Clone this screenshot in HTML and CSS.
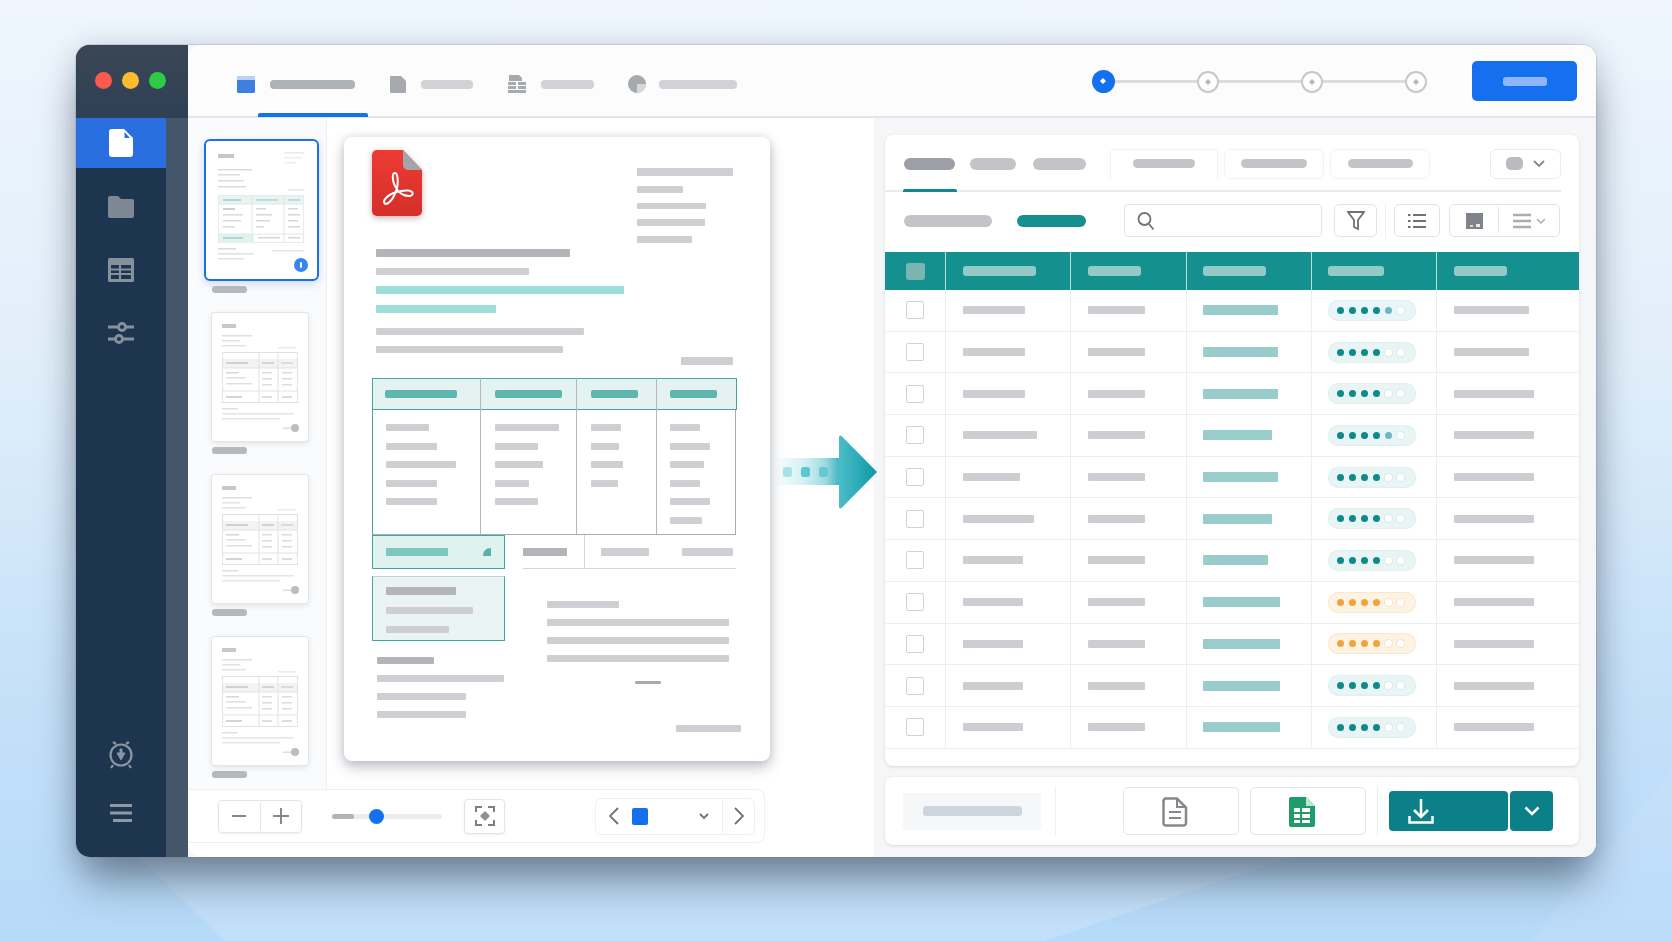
FILE: index.html
```html
<!DOCTYPE html>
<html lang="en">
<head>
    <meta charset="UTF-8">
    <title>PDF to table</title>
    <link rel="stylesheet" href="styles.css">
</head>
<body>
    <svg class="defs" width="0" height="0">
        <symbol id="thumb-page" viewBox="0 0 96 128">
            <rect x="10" y="11" width="14" height="4" fill="#b4b4b8"/>
            <rect x="10" y="22" width="30" height="1.5" fill="#d4d4d8"/>
            <rect x="10" y="27" width="18" height="1.5" fill="#d8d8dc"/>
            <rect x="10" y="32" width="24" height="1.5" fill="#d8d8dc"/>
            <rect x="66" y="34" width="18" height="1.5" fill="#e4e4e8"/>
            <rect x="10.5" y="39.5" width="75" height="50" fill="#fff" stroke="#d8d8dc"/>
            <rect x="11" y="46" width="74" height="9" fill="#efeff1"/>
            <path d="M47 40v49M66 40v49M11 55h74M11 78h74" stroke="#d8d8dc" fill="none"/>
            <rect x="14" y="49" width="22" height="2" fill="#bfbfc4"/>
            <rect x="50" y="49" width="12" height="2" fill="#c4c4c8"/>
            <rect x="69" y="49" width="12" height="2" fill="#cfcfd3"/>
            <rect x="14" y="59" width="13" height="1.5" fill="#c8c8cc"/>
            <rect x="14" y="64" width="20" height="1.5" fill="#d4d4d8"/>
            <rect x="14" y="70" width="26" height="1.5" fill="#d4d4d8"/>
            <rect x="50" y="59" width="10" height="1.5" fill="#d0d0d4"/>
            <rect x="50" y="65" width="10" height="1.5" fill="#d0d0d4"/>
            <rect x="50" y="71" width="10" height="1.5" fill="#d0d0d4"/>
            <rect x="70" y="59" width="10" height="1.5" fill="#d0d0d4"/>
            <rect x="70" y="65" width="10" height="1.5" fill="#d0d0d4"/>
            <rect x="70" y="71" width="10" height="1.5" fill="#d0d0d4"/>
            <rect x="14" y="83" width="16" height="2" fill="#c4c4c8"/>
            <rect x="50" y="83" width="10" height="2" fill="#d4d4d8"/>
            <rect x="70" y="83" width="10" height="2" fill="#d0d0d4"/>
            <rect x="10" y="95" width="16" height="1.5" fill="#d4d4d8"/>
            <rect x="10" y="100" width="72" height="1.5" fill="#dcdce0"/>
            <rect x="10" y="105" width="58" height="1.5" fill="#dcdce0"/>
            <rect x="71" y="114.5" width="8" height="1.5" fill="#d0d0d4"/>
            <circle cx="83" cy="115" r="4" fill="#a4a4a8"/>
        </symbol>
    </svg>

    <div class="window">
        <aside class="sidebar">
            <div class="lights">
                <span class="light light-red"></span>
                <span class="light light-yellow"></span>
                <span class="light light-green"></span>
            </div>
            <nav class="side-nav">
                <a class="side-item active">
                    <svg width="24" height="28" viewBox="0 0 24 28"><path d="M3 0h12l9 9v16a3 3 0 0 1-3 3H3a3 3 0 0 1-3-3V3a3 3 0 0 1 3-3z" fill="#fff"/><path d="M15.5 3l5.5 6h-5.5z" fill="#2a6fe0"/></svg>
                </a>
                <a class="side-item">
                    <svg width="26" height="22" viewBox="0 0 26 22"><path d="M2 0h8l3 3h11a2 2 0 0 1 2 2v15a2 2 0 0 1-2 2H2a2 2 0 0 1-2-2V2a2 2 0 0 1 2-2z" fill="#7d8894"/></svg>
                </a>
                <a class="side-item">
                    <svg width="26" height="24" viewBox="0 0 26 24"><rect width="26" height="24" rx="1.5" fill="#87919c"/><path d="M3 7h20v14H3z" fill="#1e3550"/><path d="M3 11.5h20M3 16h20M12 7v14" stroke="#87919c" stroke-width="2.2"/></svg>
                </a>
                <a class="side-item">
                    <svg width="28" height="24" viewBox="0 0 28 24" fill="none" stroke="#87919c" stroke-width="2.8"><path d="M1 6h26M1 18h26"/><circle cx="15" cy="6" r="3.5" fill="#1e3550"/><circle cx="12" cy="18" r="3.5" fill="#1e3550"/></svg>
                </a>
            </nav>
            <div class="side-bottom">
                <svg width="28" height="30" viewBox="0 0 28 30" fill="none" stroke="#8a95a3" stroke-width="2.2"><circle cx="14" cy="15" r="10.5"/><path d="M9 4 6 2M19 4l3-2M6 25l-2 3M22 25l2 3"/><path d="M10 13h3V9h2v4h3l-4 7z" fill="#8a95a3" stroke-width="1"/></svg>
                <svg width="22" height="18" viewBox="0 0 22 18" fill="none" stroke="#8f99a5" stroke-width="3"><path d="M0 1.5h22M0 9h22M3 16.5h19"/></svg>
            </div>
        </aside>

        <div class="main">
            <header class="topbar">
                <div class="tabs">
                    <div class="tab tab-active">
                        <svg width="18" height="17" viewBox="0 0 18 17"><rect width="18" height="17" rx="1.5" fill="#3f7fe0"/><rect width="18" height="4" fill="#b9d2f5"/></svg>
                        <span class="pill pill-tab w-85"></span>
                    </div>
                    <div class="tab">
                        <svg width="16" height="17" viewBox="0 0 16 17"><path d="M1 0h10l5 5v11a1 1 0 0 1-1 1H1a1 1 0 0 1-1-1V1a1 1 0 0 1 1-1z" fill="#a6a9ad"/></svg>
                        <span class="pill pill-tab-muted w-52"></span>
                    </div>
                    <div class="tab">
                        <svg width="18" height="18" viewBox="0 0 18 18" fill="#a6a9ad"><path d="M1 0h10l3 3v3H1z"/><rect y="7" width="8" height="3"/><rect x="10" y="7" width="8" height="3"/><rect y="11" width="8" height="3"/><rect x="10" y="11" width="8" height="3"/><rect y="15" width="18" height="3"/></svg>
                        <span class="pill pill-tab-muted w-53"></span>
                    </div>
                    <div class="tab tab-last">
                        <svg width="18" height="18" viewBox="0 0 18 18"><circle cx="9" cy="9" r="9" fill="#a6a9ad"/><path d="M9 9h9a9 9 0 0 1-9 9z" fill="#d6d8da"/></svg>
                        <span class="pill pill-tab-muted w-78"></span>
                    </div>
                </div>
                <div class="stepper">
                    <span class="step step-on"></span>
                    <span class="step-line"></span>
                    <span class="step"></span>
                    <span class="step-line"></span>
                    <span class="step"></span>
                    <span class="step-line"></span>
                    <span class="step"></span>
                </div>
                <button class="primary-btn"><span class="pill pill-primary"></span></button>
            </header>

            <div class="content">
                <section class="left-pane">
                    <div class="preview">
                        <div class="thumbs">
                            <div class="thumb thumb-active">
                                <svg width="110" height="137" viewBox="0 0 110 137">
                                    <rect x="12" y="13" width="16" height="4" fill="#bdbdc1"/>
                                    <rect x="78" y="11" width="20" height="1.5" fill="#e8e8ea"/>
                                    <rect x="78" y="16" width="18" height="1.5" fill="#ebebed"/>
                                    <rect x="78" y="21" width="12" height="1.5" fill="#ebebed"/>
                                    <rect x="12" y="28" width="34" height="1.5" fill="#d4d4d8"/>
                                    <rect x="12" y="33" width="22" height="1.5" fill="#d8d8dc"/>
                                    <rect x="12" y="39" width="26" height="1.5" fill="#d8d8dc"/>
                                    <rect x="12" y="45" width="28" height="1.5" fill="#d8d8dc"/>
                                    <rect x="82" y="48" width="16" height="1.5" fill="#e4e4e8"/>
                                    <rect x="12.5" y="54.5" width="85" height="47" fill="#fff" stroke="#dcebe9"/>
                                    <rect x="13" y="55" width="84" height="8" fill="#e4f2f0"/>
                                    <rect x="13" y="93" width="35" height="9" fill="#dff0ee"/>
                                    <path d="M46 55v47M78 55v47M13 63h84M13 93h84" stroke="#d8e6e4" fill="none"/>
                                    <rect x="17" y="58" width="18" height="2" fill="#a5cfca"/>
                                    <rect x="50" y="58" width="22" height="2" fill="#b4d6d2"/>
                                    <rect x="82" y="58" width="12" height="2" fill="#b4d6d2"/>
                                    <rect x="17" y="67" width="12" height="2" fill="#c8c8cc"/>
                                    <rect x="17" y="73" width="20" height="1.5" fill="#d4d4d8"/>
                                    <rect x="17" y="79" width="18" height="1.5" fill="#d4d4d8"/>
                                    <rect x="17" y="85" width="12" height="1.5" fill="#d4d4d8"/>
                                    <rect x="50" y="67" width="10" height="1.5" fill="#d0d0d4"/>
                                    <rect x="50" y="73" width="16" height="1.5" fill="#d0d0d4"/>
                                    <rect x="50" y="79" width="14" height="1.5" fill="#d0d0d4"/>
                                    <rect x="50" y="85" width="8" height="1.5" fill="#d0d0d4"/>
                                    <rect x="82" y="67" width="10" height="1.5" fill="#d0d0d4"/>
                                    <rect x="82" y="73" width="12" height="1.5" fill="#d0d0d4"/>
                                    <rect x="82" y="79" width="10" height="1.5" fill="#d0d0d4"/>
                                    <rect x="82" y="85" width="12" height="1.5" fill="#d0d0d4"/>
                                    <rect x="17" y="96" width="20" height="2" fill="#a5cfca"/>
                                    <rect x="52" y="96" width="22" height="1.5" fill="#d0d0d4"/>
                                    <rect x="82" y="96" width="12" height="1.5" fill="#d0d0d4"/>
                                    <rect x="12" y="107" width="18" height="1.5" fill="#d4d4d8"/>
                                    <rect x="12" y="112" width="36" height="1.5" fill="#dcdce0"/>
                                    <rect x="12" y="117" width="26" height="1.5" fill="#dcdce0"/>
                                    <rect x="66" y="109" width="32" height="1.5" fill="#e0e0e4"/>
                                    <circle cx="95" cy="124" r="7" fill="#1570ef"/>
                                    <rect x="94" y="121" width="2" height="6" rx="1" fill="#fff"/>
                                </svg>
                            </div>
                            <span class="thumb-label thumb-label-first"></span>
                            <div class="thumb"><svg width="96" height="128"><use href="#thumb-page"/></svg></div>
                            <span class="thumb-label"></span>
                            <div class="thumb"><svg width="96" height="128"><use href="#thumb-page"/></svg></div>
                            <span class="thumb-label"></span>
                            <div class="thumb"><svg width="96" height="128"><use href="#thumb-page"/></svg></div>
                            <span class="thumb-label"></span>
                        </div>

                        <div class="canvas">
                            <article class="doc">
                                <div class="doc-head">
                                    <svg class="pdf-icon" width="50" height="66" viewBox="0 0 50 66">
                                        <defs>
                                            <linearGradient id="pdf-red" x1="0" y1="0" x2="0" y2="1">
                                                <stop offset="0" stop-color="#ee3b34"/>
                                                <stop offset="1" stop-color="#d42f2b"/>
                                            </linearGradient>
                                        </defs>
                                        <path d="M5 0h26l19 20v41a5 5 0 0 1-5 5H5a5 5 0 0 1-5-5V5a5 5 0 0 1 5-5z" fill="url(#pdf-red)"/>
                                        <path d="M31 0l19 20H36a5 5 0 0 1-5-5z" fill="#a3a5aa"/>
                                        <path d="M23 23c-3 0-3 7 0 13 3 6 8 10 14 10 5 0 5-5-1-5.5-7-.5-17 2-22 7.500-4 4-1 8 3 4.500 5-4.500 10-15 8.500-25-.5-3-1.500-4.500-2.500-4.500z" fill="none" stroke="#fff" stroke-width="2"/>
                                    </svg>
                                    <div class="doc-meta">
                                        <span class="bar bar-8 w-96"></span>
                                        <span class="bar w-46"></span>
                                        <span class="bar w-69"></span>
                                        <span class="bar w-68"></span>
                                        <span class="bar w-55"></span>
                                    </div>
                                </div>

                                <div class="doc-intro">
                                    <span class="bar bar-8 bar-mid w-194"></span>
                                    <span class="bar w-153"></span>
                                    <span class="bar bar-8 bar-mint w-248"></span>
                                    <span class="bar bar-8 bar-mint w-120"></span>
                                    <span class="bar intro-break w-208"></span>
                                    <span class="bar w-187"></span>
                                </div>
                                <span class="bar bar-8 doc-total w-52"></span>

                                <div class="sheet">
                                    <div class="sheet-col col-a">
                                        <div class="sheet-head"><span class="bar bar-8 bar-teal w-72"></span></div>
                                        <div class="sheet-body">
                                            <span class="bar w-43"></span>
                                            <span class="bar w-51"></span>
                                            <span class="bar w-70"></span>
                                            <span class="bar w-51"></span>
                                            <span class="bar w-51"></span>
                                        </div>
                                    </div>
                                    <div class="sheet-col col-b">
                                        <div class="sheet-head"><span class="bar bar-8 bar-teal w-67"></span></div>
                                        <div class="sheet-body">
                                            <span class="bar w-64"></span>
                                            <span class="bar w-43"></span>
                                            <span class="bar w-48"></span>
                                            <span class="bar w-34"></span>
                                            <span class="bar w-43"></span>
                                        </div>
                                    </div>
                                    <div class="sheet-col col-c">
                                        <div class="sheet-head"><span class="bar bar-8 bar-teal w-47"></span></div>
                                        <div class="sheet-body">
                                            <span class="bar w-30"></span>
                                            <span class="bar w-28"></span>
                                            <span class="bar w-32"></span>
                                            <span class="bar w-27"></span>
                                        </div>
                                    </div>
                                    <div class="sheet-col col-d">
                                        <div class="sheet-head"><span class="bar bar-8 bar-teal w-47"></span></div>
                                        <div class="sheet-body">
                                            <span class="bar w-30"></span>
                                            <span class="bar w-40"></span>
                                            <span class="bar w-34"></span>
                                            <span class="bar w-30"></span>
                                            <span class="bar w-40"></span>
                                            <span class="bar w-32"></span>
                                        </div>
                                    </div>
                                </div>

                                <div class="doc-lower">
                                    <div class="lower-left">
                                        <div class="subtotal">
                                            <span class="bar bar-8 bar-soft-teal w-62"></span>
                                            <svg width="8" height="8" viewBox="0 0 8 8"><path d="M0 8c0-5 3-8 8-8v8z" fill="#5cb0aa"/></svg>
                                        </div>
                                        <div class="total-box">
                                            <span class="bar bar-8 bar-mid w-70"></span>
                                            <span class="bar w-87"></span>
                                            <span class="bar w-63"></span>
                                        </div>
                                        <div class="notes">
                                            <span class="bar bar-mid w-57"></span>
                                            <span class="bar w-127"></span>
                                            <span class="bar w-89"></span>
                                            <span class="bar w-89"></span>
                                        </div>
                                    </div>
                                    <div class="lower-right">
                                        <div class="lower-tabs">
                                            <div class="lower-tab lower-tab-first"><span class="bar bar-8 bar-mid w-44"></span></div>
                                            <div class="lower-tab"><span class="bar bar-8 w-48"></span></div>
                                            <div class="lower-tab lower-tab-last"><span class="bar bar-8 w-51"></span></div>
                                        </div>
                                        <div class="lower-text">
                                            <span class="bar w-72"></span>
                                            <span class="bar w-182"></span>
                                            <span class="bar w-182"></span>
                                            <span class="bar w-182"></span>
                                            <span class="bar bar-dash w-26"></span>
                                            <span class="bar bar-sum w-65"></span>
                                        </div>
                                    </div>
                                </div>
                            </article>
                        </div>
                    </div>

                    <div class="zoom-bar">
                        <div class="zoom-group">
                            <button class="zoom-btn">
                                <svg width="14" height="14" viewBox="0 0 14 14"><path d="M0 7h14" stroke="#85888c" stroke-width="2"/></svg>
                            </button>
                            <button class="zoom-btn">
                                <svg width="16" height="16" viewBox="0 0 16 16"><path d="M0 8h16M8 0v16" stroke="#85888c" stroke-width="2"/></svg>
                            </button>
                        </div>
                        <div class="slider"><span class="slider-fill"></span><span class="slider-knob"></span></div>
                        <button class="fit-btn">
                            <svg width="20" height="20" viewBox="0 0 20 20" fill="none" stroke="#7d8084" stroke-width="2"><path d="M1 6V1h6M13 1h6v5M19 14v5h-6M7 19H1v-5"/><path d="M10 5l5 5-5 5-5-5z" fill="#8d9094" stroke="none"/></svg>
                        </button>
                        <div class="pager">
                            <button class="pager-main">
                                <svg width="10" height="18" viewBox="0 0 10 18" fill="none" stroke="#6f7276" stroke-width="1.8"><path d="M9 1 1 9l8 8"/></svg>
                                <span class="page-mark"></span>
                                <svg class="pager-caret" width="10" height="7" viewBox="0 0 10 7" fill="none" stroke="#6f7276" stroke-width="1.8"><path d="M1 1l4 4 4-4"/></svg>
                            </button>
                            <button class="pager-next">
                                <svg width="10" height="18" viewBox="0 0 10 18" fill="none" stroke="#6f7276" stroke-width="1.8"><path d="M1 1l8 8-8 8"/></svg>
                            </button>
                        </div>
                    </div>
                </section>

                <section class="right-pane">
                    <div class="card results">
                        <div class="card-tabs">
                            <span class="pill pill-strong w-51"></span>
                            <span class="pill w-46"></span>
                            <span class="pill w-53"></span>
                            <div class="outline-tab outline-tab-open"><span class="pill pill-small w-62"></span></div>
                            <div class="outline-tab"><span class="pill pill-small w-66"></span></div>
                            <div class="outline-tab"><span class="pill pill-small w-65"></span></div>
                            <div class="tab-menu">
                                <span class="tab-menu-blob"></span>
                                <svg width="12" height="8" viewBox="0 0 12 8" fill="none" stroke="#85888c" stroke-width="1.8"><path d="M1 1l5 5 5-5"/></svg>
                            </div>
                        </div>

                        <div class="toolbar">
                            <span class="pill w-88"></span>
                            <span class="pill pill-teal w-70"></span>
                            <div class="search">
                                <svg width="18" height="20" viewBox="0 0 18 20" fill="none" stroke="#6f7276" stroke-width="1.8"><circle cx="7.5" cy="8" r="6"/><path d="M12 13l4.5 5.5"/></svg>
                            </div>
                            <button class="tool-btn tool-filter">
                                <svg width="18" height="20" viewBox="0 0 18 20" fill="none" stroke="#6f7276" stroke-width="1.8"><path d="M1 1h16l-6 8v9l-4-2V9z"/></svg>
                            </button>
                            <span class="tool-divider"></span>
                            <button class="tool-btn tool-list">
                                <svg width="18" height="16" viewBox="0 0 18 16" fill="none" stroke="#6f7276" stroke-width="2"><path d="M5 2h13M5 8h13M5 14h13M0 2h2.5M0 8h2.5M0 14h2.5"/></svg>
                            </button>
                            <div class="tool-group">
                                <button class="tool-cell tool-cell-img">
                                    <svg width="17" height="16" viewBox="0 0 17 16"><rect width="17" height="16" fill="#80848a"/><rect x="4" y="12" width="3" height="2" fill="#d9dbde"/><rect x="10" y="11" width="4" height="3" fill="#e8eaec"/></svg>
                                </button>
                                <button class="tool-cell">
                                    <svg width="32" height="16" viewBox="0 0 32 16" fill="none"><path d="M0 2h18M0 8h18M0 14h18" stroke="#a9acb0" stroke-width="2.5"/><path d="M24 6l4 4 4-4" stroke="#a9acb0" stroke-width="1.5"/></svg>
                                </button>
                            </div>
                        </div>

                        <div class="grid-head">
                            <div class="gh-cell gh-check"><span class="head-check"></span></div>
                            <div class="gh-cell"><span class="pill-head w-73"></span></div>
                            <div class="gh-cell"><span class="pill-head w-53"></span></div>
                            <div class="gh-cell"><span class="pill-head w-63"></span></div>
                            <div class="gh-cell"><span class="pill-head w-56"></span></div>
                            <div class="gh-cell"><span class="pill-head w-53"></span></div>
                        </div>

                        <div class="grid-row">
                            <div class="cell cell-check"><span class="check"></span></div>
                            <div class="cell"><span class="bar bar-cell w-62"></span></div>
                            <div class="cell"><span class="bar bar-cell w-57"></span></div>
                            <div class="cell"><span class="bar bar-link w-75"></span></div>
                            <div class="cell"><span class="rating rating-blue"><i class="on"></i><i class="on"></i><i class="on"></i><i class="on"></i><i class="half"></i><i></i></span></div>
                            <div class="cell"><span class="bar bar-cell w-75"></span></div>
                        </div>
                        <div class="grid-row">
                            <div class="cell cell-check"><span class="check"></span></div>
                            <div class="cell"><span class="bar bar-cell w-62"></span></div>
                            <div class="cell"><span class="bar bar-cell w-57"></span></div>
                            <div class="cell"><span class="bar bar-link w-75"></span></div>
                            <div class="cell"><span class="rating"><i class="on"></i><i class="on"></i><i class="on"></i><i class="on"></i><i></i><i></i></span></div>
                            <div class="cell"><span class="bar bar-cell w-75"></span></div>
                        </div>
                        <div class="grid-row">
                            <div class="cell cell-check"><span class="check"></span></div>
                            <div class="cell"><span class="bar bar-cell w-62"></span></div>
                            <div class="cell"><span class="bar bar-cell w-57"></span></div>
                            <div class="cell"><span class="bar bar-link w-75"></span></div>
                            <div class="cell"><span class="rating"><i class="on"></i><i class="on"></i><i class="on"></i><i class="on"></i><i></i><i></i></span></div>
                            <div class="cell"><span class="bar bar-cell w-80"></span></div>
                        </div>
                        <div class="grid-row">
                            <div class="cell cell-check"><span class="check"></span></div>
                            <div class="cell"><span class="bar bar-cell w-74"></span></div>
                            <div class="cell"><span class="bar bar-cell w-57"></span></div>
                            <div class="cell"><span class="bar bar-link w-69"></span></div>
                            <div class="cell"><span class="rating"><i class="on"></i><i class="on"></i><i class="on"></i><i class="on"></i><i class="half"></i><i></i></span></div>
                            <div class="cell"><span class="bar bar-cell w-80"></span></div>
                        </div>
                        <div class="grid-row">
                            <div class="cell cell-check"><span class="check"></span></div>
                            <div class="cell"><span class="bar bar-cell w-57"></span></div>
                            <div class="cell"><span class="bar bar-cell w-57"></span></div>
                            <div class="cell"><span class="bar bar-link w-75"></span></div>
                            <div class="cell"><span class="rating"><i class="on"></i><i class="on"></i><i class="on"></i><i class="on"></i><i></i><i></i></span></div>
                            <div class="cell"><span class="bar bar-cell w-80"></span></div>
                        </div>
                        <div class="grid-row">
                            <div class="cell cell-check"><span class="check"></span></div>
                            <div class="cell"><span class="bar bar-cell w-71"></span></div>
                            <div class="cell"><span class="bar bar-cell w-57"></span></div>
                            <div class="cell"><span class="bar bar-link w-69"></span></div>
                            <div class="cell"><span class="rating"><i class="on"></i><i class="on"></i><i class="on"></i><i class="on"></i><i></i><i></i></span></div>
                            <div class="cell"><span class="bar bar-cell w-80"></span></div>
                        </div>
                        <div class="grid-row">
                            <div class="cell cell-check"><span class="check"></span></div>
                            <div class="cell"><span class="bar bar-cell w-60"></span></div>
                            <div class="cell"><span class="bar bar-cell w-57"></span></div>
                            <div class="cell"><span class="bar bar-link w-65"></span></div>
                            <div class="cell"><span class="rating"><i class="on"></i><i class="on"></i><i class="on"></i><i class="on"></i><i></i><i></i></span></div>
                            <div class="cell"><span class="bar bar-cell w-80"></span></div>
                        </div>
                        <div class="grid-row">
                            <div class="cell cell-check"><span class="check"></span></div>
                            <div class="cell"><span class="bar bar-cell w-60"></span></div>
                            <div class="cell"><span class="bar bar-cell w-57"></span></div>
                            <div class="cell"><span class="bar bar-link w-77"></span></div>
                            <div class="cell"><span class="rating rating-warn"><i class="on"></i><i class="on"></i><i class="on"></i><i class="on"></i><i></i><i></i></span></div>
                            <div class="cell"><span class="bar bar-cell w-80"></span></div>
                        </div>
                        <div class="grid-row">
                            <div class="cell cell-check"><span class="check"></span></div>
                            <div class="cell"><span class="bar bar-cell w-60"></span></div>
                            <div class="cell"><span class="bar bar-cell w-57"></span></div>
                            <div class="cell"><span class="bar bar-link w-77"></span></div>
                            <div class="cell"><span class="rating rating-warn"><i class="on"></i><i class="on"></i><i class="on"></i><i class="on"></i><i></i><i></i></span></div>
                            <div class="cell"><span class="bar bar-cell w-80"></span></div>
                        </div>
                        <div class="grid-row">
                            <div class="cell cell-check"><span class="check"></span></div>
                            <div class="cell"><span class="bar bar-cell w-60"></span></div>
                            <div class="cell"><span class="bar bar-cell w-57"></span></div>
                            <div class="cell"><span class="bar bar-link w-77"></span></div>
                            <div class="cell"><span class="rating"><i class="on"></i><i class="on"></i><i class="on"></i><i class="on"></i><i></i><i></i></span></div>
                            <div class="cell"><span class="bar bar-cell w-80"></span></div>
                        </div>
                        <div class="grid-row">
                            <div class="cell cell-check"><span class="check"></span></div>
                            <div class="cell"><span class="bar bar-cell w-60"></span></div>
                            <div class="cell"><span class="bar bar-cell w-57"></span></div>
                            <div class="cell"><span class="bar bar-link w-77"></span></div>
                            <div class="cell"><span class="rating"><i class="on"></i><i class="on"></i><i class="on"></i><i class="on"></i><i></i><i></i></span></div>
                            <div class="cell"><span class="bar bar-cell w-80"></span></div>
                        </div>
                    </div>

                    <div class="card actions">
                        <div class="file-name"><span class="file-name-pill"></span></div>
                        <span class="action-divider"></span>
                        <button class="file-btn">
                            <svg width="26" height="30" viewBox="0 0 26 30" fill="none" stroke="#85888c" stroke-width="2.5"><path d="M3 1.5h12l9 9V26a2.5 2.5 0 0 1-2.5 2.5H3.5A2.5 2.5 0 0 1 1.5 26V3.5z"/><path d="M15 1.5V10h9M7 15h12M7 21h12" stroke-width="2"/></svg>
                        </button>
                        <button class="file-btn">
                            <svg width="26" height="30" viewBox="0 0 26 30"><path d="M2 0h15l9 9v19a2 2 0 0 1-2 2H2a2 2 0 0 1-2-2V2a2 2 0 0 1 2-2z" fill="#1f9d68"/><path d="M17 0l9 9h-9z" fill="#bfe6d4"/><g fill="#fff"><rect x="5" y="11" width="6" height="4"/><rect x="13" y="11" width="8" height="4"/><rect x="5" y="17" width="6" height="4"/><rect x="13" y="17" width="8" height="4"/><rect x="5" y="23" width="6" height="3"/><rect x="13" y="23" width="8" height="3"/></g></svg>
                        </button>
                        <span class="action-divider action-divider-right"></span>
                        <div class="download">
                            <button class="download-main">
                                <svg width="26" height="26" viewBox="0 0 26 26" fill="none" stroke="#fff" stroke-width="2.5"><path d="M13 1v17M6 12l7 7 7-7M1.500 18v6.500h23V18"/></svg>
                            </button>
                            <button class="download-menu">
                                <svg width="16" height="10" viewBox="0 0 16 10" fill="none" stroke="#fff" stroke-width="2.5"><path d="M1.500 1.500 8 8l6.500-6.500"/></svg>
                            </button>
                        </div>
                    </div>
                </section>

                <div class="flow-arrow">
                    <svg width="104" height="74" viewBox="0 0 104 74">
                        <defs>
                            <linearGradient id="arrow-shaft" x1="0" y1="0" x2="1" y2="0">
                                <stop offset="0" stop-color="#bfe9ec" stop-opacity="0"/>
                                <stop offset="0.45" stop-color="#c4ebee" stop-opacity="0.7"/>
                                <stop offset="0.8" stop-color="#9ad9df"/>
                                <stop offset="1" stop-color="#45b6c3"/>
                            </linearGradient>
                            <linearGradient id="arrow-head" x1="0" y1="0" x2="1" y2="0">
                                <stop offset="0" stop-color="#4cbdc9"/>
                                <stop offset="1" stop-color="#0c99a6"/>
                            </linearGradient>
                        </defs>
                        <rect x="0" y="23" width="66" height="27" fill="url(#arrow-shaft)"/>
                        <rect x="10" y="32" width="9" height="10" rx="2.5" fill="#a8e2e6"/>
                        <rect x="28" y="32" width="9" height="10" rx="2.5" fill="#5cc7d2"/>
                        <rect x="46" y="32" width="9" height="10" rx="2.5" fill="#68c8d0"/>
                        <path d="M66 2a1.500 1.500 0 0 1 2.500-1L104 37 68.500 73a1.500 1.500 0 0 1-2.500-1z" fill="url(#arrow-head)"/>
                    </svg>
                </div>
            </div>
        </div>
    </div>
</body>
</html>
```

FILE: styles.css
```css
:root {
    --navy: #1e3550;
    --blue: #1570ef;
    --teal: #14908f;
    --line: #eceef1;
    --bar: #cfcfd3;
}

* {
    margin: 0;
    padding: 0;
    box-sizing: border-box;
}

html, body {
    height: 100%;
}

body {
    font-family: "Inter", sans-serif;
    overflow: hidden;
    position: relative;
    padding: 45px 76px 0;
    background: linear-gradient(180deg, #eff6fd 0%, #e0eefa 40%, #c6e1f9 72%, #b6daf9 100%);
}

/* soft shapes in the wallpaper */
body::before,
body::after {
    content: "";
    position: absolute;
    inset: 0;
    background: rgba(255, 255, 255, 0.16);
}

body::before {
    clip-path: polygon(100px 820px, 1400px 820px, 1045px 941px, 225px 941px);
}

body::after {
    background: rgba(255, 255, 255, 0.08);
    clip-path: polygon(1672px 770px, 1672px 941px, 1530px 941px);
}

.defs {
    display: block;
    height: 0;
}

button {
    background: #fff;
    border: none;
    display: flex;
    align-items: center;
    justify-content: center;
}

.window {
    position: relative;
    z-index: 1;
    width: 1520px;
    height: 812px;
    display: flex;
    border-radius: 14px;
    background: #f5f6f8;
    box-shadow:
        0 0 0 1px rgba(110, 120, 135, 0.22),
        0 30px 42px -6px rgba(40, 50, 65, 0.52),
        0 0 28px rgba(60, 80, 110, 0.18);
    overflow: hidden;
}

/* sidebar */
.sidebar {
    width: 112px;
    flex: none;
    display: flex;
    flex-direction: column;
    background: linear-gradient(90deg, var(--navy) 90px, #44566a 90px);
}

.lights {
    height: 73px;
    display: flex;
    align-items: center;
    gap: 10px;
    padding: 0 0 2px 19px;
    background: linear-gradient(180deg, #3a4654, #2f4055);
}

.light {
    width: 17px;
    height: 17px;
    border-radius: 50%;
}

.light-red { background: #fb5a50; }
.light-yellow { background: #fbbd2e; }
.light-green { background: #2ecb47; }

.side-nav {
    width: 90px;
    display: flex;
    flex-direction: column;
}

.side-item {
    height: 50px;
    margin-bottom: 13px;
    display: flex;
    align-items: center;
    justify-content: center;
}

.side-item.active {
    background: #2a6fe0;
    margin-bottom: 14px;
}

.side-bottom {
    width: 90px;
    margin-top: auto;
    padding-bottom: 35px;
    display: flex;
    flex-direction: column;
    align-items: center;
    gap: 34px;
}

/* top bar */
.main {
    flex: 1;
    min-width: 0;
    display: flex;
    flex-direction: column;
    background: #fff;
    border-radius: 14px 0 0 14px;
    overflow: hidden;
}

.topbar {
    height: 73px;
    flex: none;
    display: flex;
    align-items: center;
    padding: 0 19px 0 49px;
    background: #fcfcfd;
    border-bottom: 2px solid #e3e5e8;
}

.tabs {
    display: flex;
    align-items: center;
    gap: 35px;
    height: 100%;
    margin-bottom: 1px;
}

.tab {
    position: relative;
    height: 100%;
    display: flex;
    align-items: center;
    gap: 15px;
    padding-top: 8px;
}

.tab-last {
    gap: 13px;
    margin-left: -1px;
}

.tab-active::after {
    content: "";
    position: absolute;
    left: 21px;
    bottom: -1px;
    width: 110px;
    height: 4px;
    background: var(--blue);
    border-radius: 2px 2px 0 0;
}

.pill {
    display: block;
    height: 12px;
    border-radius: 6px;
    background: #c2c4c8;
}

.pill-tab { height: 9px; border-radius: 4px; background: #adb2b8; }
.pill-tab-muted { height: 9px; border-radius: 4px; background: #d0d2d5; }
.pill-small { height: 9px; }
.pill-strong { background: #9ca0a6; }
.pill-teal { background: var(--teal); }

.stepper {
    margin-left: auto;
    margin-right: 45px;
    margin-top: 2px;
    display: flex;
    align-items: center;
}

.step {
    width: 22px;
    height: 22px;
    border-radius: 50%;
    border: 2px solid #c4c7cb;
    background: #fff;
    position: relative;
}

.step::after {
    content: "";
    position: absolute;
    left: 6px;
    top: 6px;
    width: 6px;
    height: 6px;
    background: #b5b8bc;
    transform: rotate(45deg) scale(0.7);
}

.step-on {
    width: 23px;
    height: 23px;
    border: none;
    background: var(--blue);
}

.step-on::after {
    left: 8px;
    top: 8px;
    background: #fff;
}

.step-line {
    width: 82px;
    height: 3px;
    background: #d9dbde;
}

.primary-btn {
    width: 105px;
    height: 40px;
    margin-top: 1px;
    border-radius: 5px;
    background: var(--blue);
}

.pill-primary {
    width: 44px;
    height: 9px;
    border-radius: 3px;
    background: #8fb6f8;
}

/* content */
.content {
    flex: 1;
    min-height: 0;
    display: flex;
    position: relative;
}

.left-pane {
    width: 686px;
    flex: none;
    display: flex;
    flex-direction: column;
    background: #fff;
}

.preview {
    height: 671px;
    flex: none;
    display: flex;
}

.thumbs {
    width: 139px;
    flex: none;
    padding: 21px 0 0 16px;
    background: #fafbfc;
    border-right: 1px solid #eceef0;
    overflow: hidden;
}

.thumb {
    width: 96px;
    height: 128px;
    margin-left: 8px;
    background: #fff;
    border-radius: 3px;
    box-shadow: 0 0 0 1px #e4e5e8, 0 2px 6px rgba(40, 50, 70, 0.14);
}

.thumb svg {
    display: block;
    opacity: 0.72;
}

.thumb-active {
    width: 115px;
    height: 142px;
    margin-left: 0;
    border: 2.5px solid #1e6fe0;
    border-radius: 6px;
    box-shadow: 0 3px 8px rgba(30, 90, 200, 0.2);
}

.thumb-active svg {
    opacity: 0.85;
}

.thumb-label {
    display: block;
    width: 35px;
    height: 7px;
    margin: 6px 0 21px 8px;
    border-radius: 3px;
    background: #b6b8bc;
}

.thumb-label-first {
    margin-top: 5px;
    margin-bottom: 20px;
}

.canvas {
    flex: 1;
    padding: 19px 0 0 17px;
    background: #fff;
}

/* document */
.doc {
    width: 426px;
    height: 624px;
    border-radius: 8px;
    background: #fff;
    box-shadow: 0 6px 14px rgba(30, 40, 60, 0.28), 0 0 8px rgba(30, 40, 60, 0.1);
}

.bar {
    display: block;
    height: 7px;
    background: var(--bar);
    border-radius: 1px;
}

.bar-8 { height: 8px; }
.bar-mid { background: #b5b5b9; }
.bar-mint { background: #9adfd8; }
.bar-teal { background: #5fb5b0; border-radius: 2px; }
.bar-soft-teal { background: #7cc9c2; }
.bar-cell { height: 8px; background: #cdced2; }
.bar-link { height: 10px; background: #98cdcb; }

.doc-head {
    display: flex;
    justify-content: space-between;
    height: 106px;
    padding: 13px 37px 0 28px;
}

.pdf-icon {
    filter: drop-shadow(0 2px 3px rgba(120, 30, 30, 0.35));
}

.doc-meta {
    display: flex;
    flex-direction: column;
    gap: 10px;
    width: 96px;
    margin-top: 18px;
}

.doc-intro {
    display: flex;
    flex-direction: column;
    gap: 11px;
    margin: 6px 0 0 32px;
}

.intro-break {
    margin-top: 4px;
}

.doc-total {
    margin: 4px 37px 0 auto;
}

.sheet {
    display: grid;
    grid-template-columns: 107px 96px 80px 1fr;
    width: 364px;
    height: 157px;
    margin: 13px 0 0 28px;
    border-left: 1.5px solid #4aa39f;
    border-bottom: 1.5px solid #a9abaf;
}

.sheet-col + .sheet-col {
    border-left: 1px solid #b4b6ba;
}

.col-d {
    border-right: 1.5px solid #a9abaf;
}

.sheet-head {
    height: 32px;
    padding: 11px 0 0 12px;
    background: #e4f2f1;
    border-top: 1.5px solid #4aa39f;
    border-bottom: 1.5px solid #4aa39f;
}

.col-b .sheet-head, .col-c .sheet-head { padding-left: 14px; }
.col-d .sheet-head {
    padding-left: 13px;
    margin-right: -1.5px;
    border-right: 1.5px solid #4aa39f;
}

.sheet-body {
    display: flex;
    flex-direction: column;
    gap: 11.6px;
    padding: 14px 0 0 13px;
}

.col-b .sheet-body, .col-c .sheet-body { padding-left: 14px; }

.doc-lower {
    display: grid;
    grid-template-columns: 133px 1fr;
    margin-left: 28px;
}

.subtotal {
    height: 34px;
    display: flex;
    align-items: center;
    justify-content: space-between;
    padding: 0 13px;
    background: #dff2f0;
    border: 1.5px solid #3ea79f;
}

.total-box {
    height: 65px;
    margin-top: 7px;
    display: flex;
    flex-direction: column;
    gap: 12px;
    padding: 10px 0 0 13px;
    background: #eaf4f4;
    border: 1.5px solid #3ea79f;
    border-top-color: #c6d2d2;
}

.notes {
    display: flex;
    flex-direction: column;
    gap: 11px;
    margin: 16px 0 0 5px;
}

.lower-right {
    padding-left: 18px;
}

.lower-tabs {
    width: 213px;
    height: 34px;
    display: flex;
    border-bottom: 1.5px solid #d4d5d8;
}

.lower-tab {
    width: 97px;
    display: flex;
    align-items: center;
    padding-left: 16px;
}

.lower-tab-first {
    width: 62px;
    padding-left: 0;
    border-right: 1px solid #d4d5d8;
}

.lower-tab-last {
    width: 54px;
    padding-left: 0;
}

.lower-text {
    display: flex;
    flex-direction: column;
    gap: 11px;
    margin: 32px 0 0 24px;
}

.bar-dash {
    height: 3px;
    margin: 8px 0 0 88px;
    background: #aaaaae;
}

.bar-sum {
    margin: 30px 0 0 129px;
}

/* zoom bar */
.zoom-bar {
    width: 577px;
    height: 54px;
    display: flex;
    align-items: center;
    padding-left: 30px;
    background: #fff;
    border: 1px solid #eef0f2;
    border-left: none;
    border-radius: 0 8px 8px 0;
}

.zoom-group {
    display: flex;
    width: 84px;
    height: 33px;
    border: 1px solid #e4e5e8;
    border-radius: 4px;
    box-shadow: 0 1px 2px rgba(40, 50, 70, 0.08);
}

.zoom-btn {
    flex: 1;
    border-radius: 4px;
}

.zoom-btn + .zoom-btn {
    border-left: 1px solid #e4e5e8;
}

.slider {
    position: relative;
    width: 110px;
    height: 5px;
    margin-left: 30px;
    border-radius: 3px;
    background: #ebecef;
}

.slider-fill {
    display: block;
    width: 22px;
    height: 100%;
    border-radius: 3px;
    background: #b2b3b7;
}

.slider-knob {
    position: absolute;
    left: 37px;
    top: -5px;
    width: 15px;
    height: 15px;
    border-radius: 50%;
    background: var(--blue);
}

.fit-btn {
    width: 41px;
    height: 35px;
    margin-left: 22px;
    border: 1px solid #e4e5e8;
    border-radius: 4px;
    box-shadow: 0 1px 2px rgba(40, 50, 70, 0.08);
}

.pager {
    width: 160px;
    height: 37px;
    margin-left: 90px;
    display: flex;
    border: 1px solid #eef0f2;
    border-radius: 6px;
}

.pager-main {
    width: 127px;
    justify-content: flex-start;
    padding-left: 13px;
    border-radius: 6px 0 0 6px;
    border-right: 1px solid #eef0f2;
}

.page-mark {
    width: 16px;
    height: 17px;
    margin-left: 13px;
    border-radius: 2px;
    background: var(--blue);
}

.pager-caret {
    margin-left: auto;
    margin-right: 13px;
}

.pager-next {
    flex: 1;
    border-radius: 0 6px 6px 0;
}

/* right pane */
.right-pane {
    flex: 1;
    min-width: 0;
    display: flex;
    flex-direction: column;
    gap: 11px;
    padding: 17px 17px 0 11px;
    background: #f5f6f8;
}

.card {
    background: #fff;
    border-radius: 8px;
    box-shadow: 0 1px 3px rgba(40, 50, 70, 0.14);
}

.results {
    height: 631px;
    overflow: hidden;
}

.card-tabs {
    height: 57px;
    margin-right: 18px;
    display: flex;
    align-items: center;
    padding: 2px 0 0 19px;
    border-bottom: 2px solid #e9ebee;
    position: relative;
}

.card-tabs > .w-46 { margin-left: 15px; }
.card-tabs > .w-53 { margin-left: 17px; }

.card-tabs::after {
    content: "";
    position: absolute;
    left: 18px;
    bottom: -2px;
    width: 54px;
    height: 3px;
    background: #0f8a8c;
    border-radius: 2px 2px 0 0;
}

.outline-tab {
    width: 100px;
    height: 30px;
    margin-left: 6px;
    display: flex;
    align-items: center;
    justify-content: center;
    border: 1px solid #f0f1f3;
    border-radius: 7px;
}

.outline-tab-open {
    width: 108px;
    margin-left: 24px;
    border-bottom-color: transparent;
    border-radius: 5px 5px 0 0;
}

.tab-menu {
    width: 71px;
    height: 30px;
    margin-left: auto;
    display: flex;
    align-items: center;
    justify-content: center;
    gap: 10px;
    border: 1px solid #e9ebee;
    border-radius: 6px;
}

.tab-menu-blob {
    width: 17px;
    height: 13px;
    border-radius: 5px;
    background: #b9bbbf;
}

.toolbar {
    height: 60px;
    display: flex;
    align-items: center;
    padding: 0 19px 3px;
}

.toolbar .pill-teal {
    margin-left: 25px;
}

.search {
    width: 199px;
    height: 33px;
    margin-left: 38px;
    display: flex;
    align-items: center;
    padding-left: 12px;
    border: 1px solid #e2e4e7;
    border-radius: 4px;
}

.tool-btn {
    height: 33px;
    border: 1px solid #e2e4e7;
    border-radius: 5px;
}

.tool-filter {
    width: 43px;
    margin-left: 12px;
}

.tool-divider {
    width: 1px;
    height: 36px;
    margin: 0 8px;
    background: #eef0f2;
}

.tool-list {
    width: 46px;
}

.tool-group {
    display: flex;
    height: 33px;
    margin-left: 9px;
    border: 1px solid #e2e4e7;
    border-radius: 5px;
}

.tool-cell {
    width: 60px;
    border-radius: 5px;
}

.tool-cell-img {
    width: 49px;
    border-right: 1px solid #e2e4e7;
}

.grid-head, .grid-row {
    display: grid;
    grid-template-columns: 61px 125px 116px 125px 125px 142px;
}

.grid-head {
    height: 38px;
    background: var(--teal);
}

.gh-cell {
    display: flex;
    align-items: center;
    padding-left: 17px;
    border-right: 1px solid #b9dfdd;
}

.gh-cell:nth-child(4), .gh-cell:nth-child(5),
.cell:nth-child(4), .cell:nth-child(5) {
    padding-left: 16px;
}

.gh-cell:last-child {
    border-right: none;
}

.gh-check {
    padding: 0;
    justify-content: center;
}

.head-check {
    width: 19px;
    height: 17px;
    border-radius: 3px;
    background: #7ab5b2;
}

.pill-head {
    display: block;
    height: 10px;
    border-radius: 3px;
    background: #93cac6;
}

.grid-row {
    height: 41.7px;
    border-bottom: 1px solid var(--line);
}

.cell {
    display: flex;
    align-items: center;
    padding-left: 17px;
    border-right: 1px solid var(--line);
}

.cell:last-child {
    border-right: none;
}

.cell-check {
    padding: 0;
    justify-content: center;
}

.check {
    width: 18px;
    height: 18px;
    border: 1.5px solid #cfd2d6;
    border-radius: 2px;
    background: #fff;
}

.rating {
    width: 88px;
    height: 21px;
    display: flex;
    align-items: center;
    gap: 5px;
    padding-left: 9px;
    border-radius: 11px;
    background: #e9f4f4;
    box-shadow: inset 0 0 0 1px #dff0f0;
}

.rating-blue {
    background: #e8f5f9;
}

.rating i {
    width: 7px;
    height: 7px;
    border-radius: 50%;
    background: #fff;
    box-shadow: 0 0 0 1px #d9ecec;
}

.rating .on {
    background: #0e8a8a;
    box-shadow: none;
}

.rating .half {
    background: #6bb8c4;
    box-shadow: none;
}

.rating-warn {
    background: #fdf3e3;
    box-shadow: inset 0 0 0 1px #fae8cc;
}

.rating-warn i {
    box-shadow: 0 0 0 1px #f8e4c4;
}

.rating-warn .on {
    background: #f2a33a;
}

.actions {
    height: 68px;
    display: flex;
    align-items: center;
    padding-left: 18px;
}

.file-name {
    width: 138px;
    height: 37px;
    display: flex;
    align-items: center;
    justify-content: center;
    background: #f6f7f9;
    border-radius: 4px;
}

.file-name-pill {
    width: 99px;
    height: 10px;
    border-radius: 3px;
    background: #cfd5de;
}

.action-divider {
    width: 1px;
    height: 50px;
    margin: 0 67px 0 14px;
    background: #eef0f2;
}

.file-btn {
    width: 116px;
    height: 48px;
    margin-right: 11px;
    padding: 2px 12px 0 0;
    border: 1.5px solid #e4e6e9;
    border-radius: 5px;
}

.action-divider-right {
    margin: 0 11px 0 0;
}

.download {
    display: flex;
    gap: 2px;
}

.download-main {
    width: 119px;
    height: 40px;
    justify-content: flex-start;
    padding-left: 19px;
    background: #0c8088;
    border-radius: 4px;
}

.download-menu {
    width: 43px;
    height: 40px;
    background: #0c8088;
    border-radius: 4px;
}

.flow-arrow {
    position: absolute;
    left: 585px;
    top: 317px;
}

.flow-arrow svg {
    display: block;
}

/* bar widths */
.w-26 { width: 26px; }
.w-27 { width: 27px; }
.w-28 { width: 28px; }
.w-30 { width: 30px; }
.w-32 { width: 32px; }
.w-34 { width: 34px; }
.w-40 { width: 40px; }
.w-43 { width: 43px; }
.w-44 { width: 44px; }
.w-46 { width: 46px; }
.w-47 { width: 47px; }
.w-48 { width: 48px; }
.w-51 { width: 51px; }
.w-52 { width: 52px; }
.w-53 { width: 53px; }
.w-55 { width: 55px; }
.w-56 { width: 56px; }
.w-57 { width: 57px; }
.w-60 { width: 60px; }
.w-62 { width: 62px; }
.w-63 { width: 63px; }
.w-64 { width: 64px; }
.w-65 { width: 65px; }
.w-66 { width: 66px; }
.w-67 { width: 67px; }
.w-68 { width: 68px; }
.w-69 { width: 69px; }
.w-70 { width: 70px; }
.w-71 { width: 71px; }
.w-72 { width: 72px; }
.w-73 { width: 73px; }
.w-74 { width: 74px; }
.w-75 { width: 75px; }
.w-77 { width: 77px; }
.w-78 { width: 78px; }
.w-80 { width: 80px; }
.w-85 { width: 85px; }
.w-87 { width: 87px; }
.w-88 { width: 88px; }
.w-89 { width: 89px; }
.w-96 { width: 96px; }
.w-120 { width: 120px; }
.w-127 { width: 127px; }
.w-153 { width: 153px; }
.w-182 { width: 182px; }
.w-187 { width: 187px; }
.w-194 { width: 194px; }
.w-208 { width: 208px; }
.w-248 { width: 248px; }
```
